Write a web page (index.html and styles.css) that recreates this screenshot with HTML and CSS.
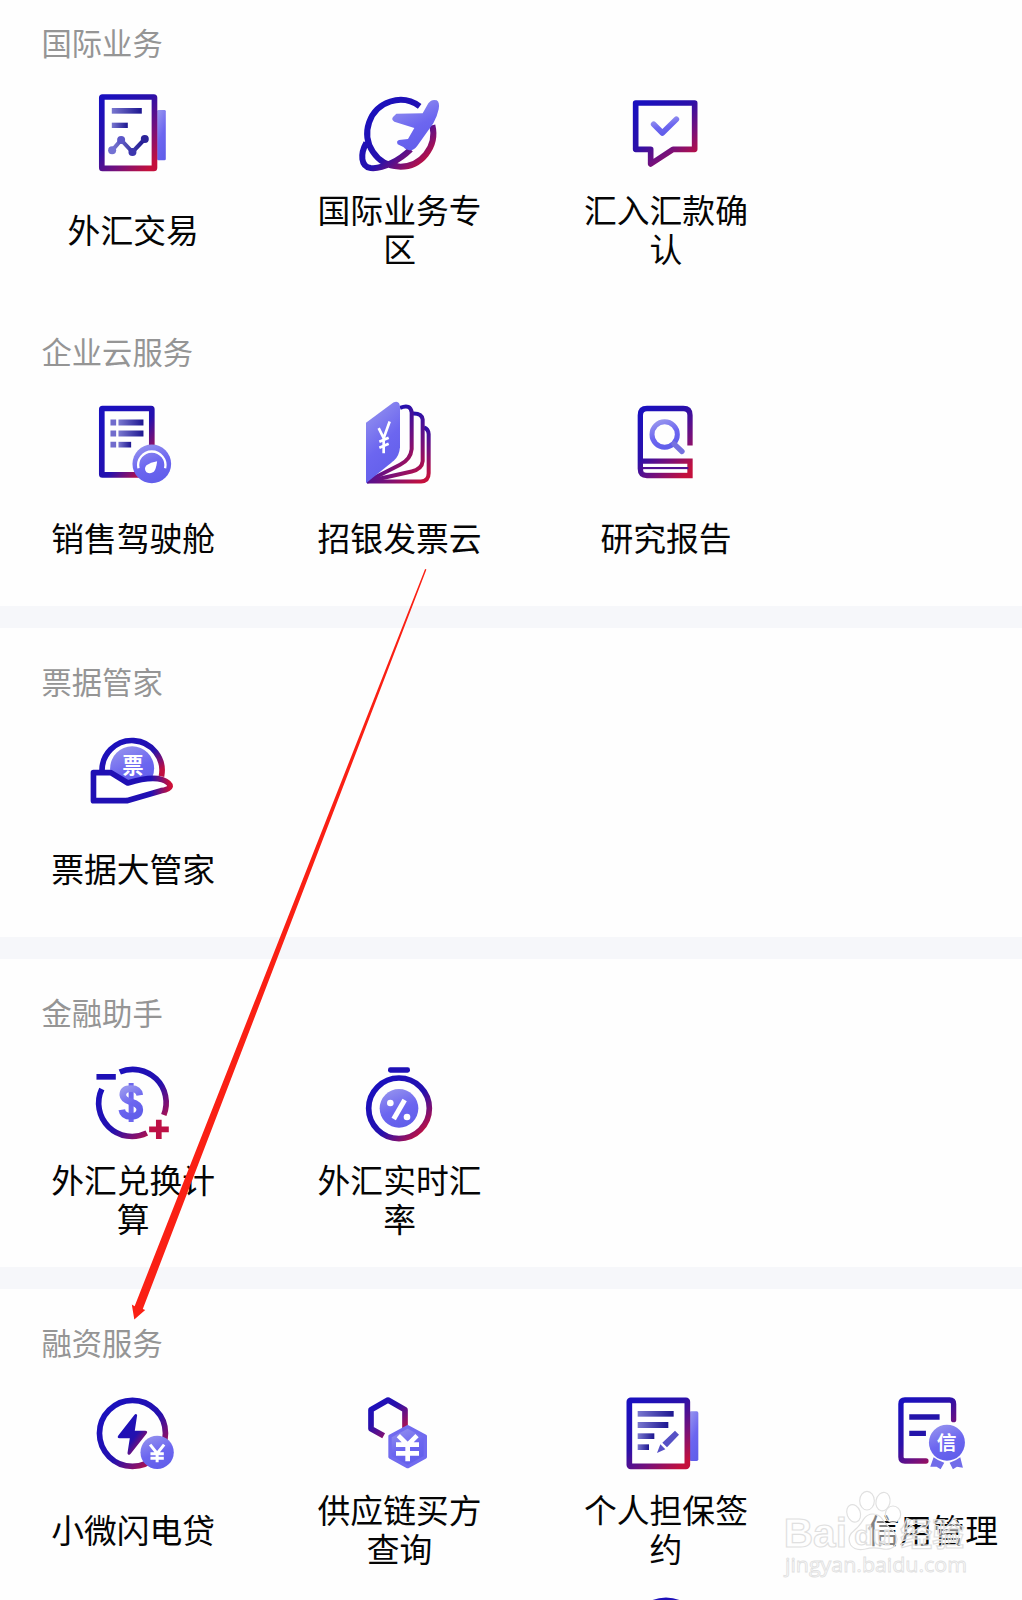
FILE: index.html
```html
<!DOCTYPE html>
<html lang="zh-CN">
<head>
  <meta charset="UTF-8">
  <title>全部服务</title>
  <meta name="viewport" content="width=device-width, initial-scale=1.0">
  <link rel="stylesheet" href="styles.css">
</head>
<body>

  <!-- Shared gradients for all icons -->
  <svg class="defs" width="0" height="0">
    <defs>
      <linearGradient id="line" x1="0.1" y1="0" x2="0.9" y2="1">
        <stop offset="0" stop-color="#1a10be"/>
        <stop offset="0.4" stop-color="#2a10aa"/>
        <stop offset="0.72" stop-color="#7a1078"/>
        <stop offset="1" stop-color="#c4103c"/>
      </linearGradient>
      <linearGradient id="ring" x1="0.1" y1="0.1" x2="0.9" y2="0.9">
        <stop offset="0" stop-color="#1a10be"/>
        <stop offset="0.58" stop-color="#2410ae"/>
        <stop offset="0.85" stop-color="#86106c"/>
        <stop offset="1" stop-color="#c01040"/>
      </linearGradient>
      <linearGradient id="soft" x1="0.2" y1="0" x2="0.6" y2="1">
        <stop offset="0" stop-color="#9593ee"/>
        <stop offset="0.55" stop-color="#6c66f0"/>
        <stop offset="1" stop-color="#615eea"/>
      </linearGradient>
      <linearGradient id="bar" x1="0" y1="0" x2="1" y2="0">
        <stop offset="0" stop-color="#7a78d0"/>
        <stop offset="1" stop-color="#1c1590"/>
      </linearGradient>
    </defs>
  </svg>

  <main class="page">

    <section class="section section-first">
      <h2 class="title">国际业务</h2>
      <div class="row">
        <div class="item">
          <svg class="icon" viewBox="195.6 225 288 288">
            <rect x="412" y="300" width="26" height="151" rx="4" fill="url(#soft)"/>
            <rect x="246" y="261" width="158" height="214" rx="2" fill="#fff" stroke="url(#line)" stroke-width="17"/>
            <rect x="276" y="294" width="90" height="17" fill="url(#bar)"/>
            <rect x="276" y="338" width="48" height="16" fill="url(#bar)"/>
            <path d="M277 421L304 390L338 426L375 387" fill="none" stroke="url(#bar)" stroke-width="12"/>
            <circle cx="277" cy="421" r="12" fill="#7371d3"/>
            <circle cx="304" cy="390" r="12" fill="#5c57c8"/>
            <circle cx="338" cy="426" r="12" fill="#3c36ae"/>
            <circle cx="375" cy="387" r="12" fill="#2c2499"/>
          </svg>
          <p class="label">外汇交易</p>
        </div>
        <div class="item">
          <svg class="icon" viewBox="996 225 288 288">
            <path d="M1199 289A99 100 0 1 0 1237 346M1039 398C1020 432 1022 470 1052 474C1090 478 1140 449 1172 418" fill="none" stroke="url(#ring)" stroke-width="18"/>
            <path d="M1208 310L1225 280Q1235 266 1250 271Q1260 277 1256 298Q1252 318 1240 340L1192 407Q1182 421 1168 421Q1156 420 1150 411L1133 403Q1128 393 1137 390L1164 387L1183 354L1123 335Q1113 329 1119 321L1129 311Z" fill="url(#soft)"/>
          </svg>
          <p class="label">国际业务专区</p>
        </div>
        <div class="item">
          <svg class="icon" viewBox="355 15 288 288">
            <path d="M408 69H585V208H520L453 252V208H408Z" fill="none" stroke="url(#line)" stroke-width="17" stroke-linejoin="round"/>
            <path d="M462 133L488 159L530 118" fill="none" stroke="url(#soft)" stroke-width="17" stroke-linecap="round" stroke-linejoin="round"/>
          </svg>
          <p class="label">汇入汇款确认</p>
        </div>
      </div>
    </section>

    <section class="section">
      <h2 class="title">企业云服务</h2>
      <div class="row">
        <div class="item">
          <svg class="icon" viewBox="195.6 220.5 288 288">
            <rect x="246" y="264" width="150" height="199" rx="2" fill="none" stroke="url(#ring)" stroke-width="17"/>
            <g fill="url(#bar)">
              <rect x="296" y="297" width="75" height="18"/>
              <rect x="296" y="330" width="75" height="18"/>
              <rect x="296" y="364" width="38" height="17"/>
            </g>
            <path d="M272 297h17v18h-17zM272 330h17v18h-17zM272 364h17v17h-17z" fill="#716ccc"/>
            <circle cx="396" cy="430" r="58" fill="url(#soft)"/>
            <path d="M356 443A41 41 0 1 1 436 443" fill="none" stroke="#fff" stroke-width="7"/>
            <path d="M412 422Q392 425 380 434Q371 444 380 455Q391 462 402 454Q409 446 412 422Z" fill="#fff"/>
          </svg>
          <p class="label">销售驾驶舱</p>
        </div>
        <div class="item">
          <svg class="icon" viewBox="996 220.5 288 288">
            <g fill="none" stroke="url(#line)" stroke-width="12">
              <path d="M1041 483H1203Q1226 481 1226 458V341Q1225 325 1212 321"/>
              <path d="M1041 483L1175 453Q1206 446 1208 422V297Q1206 278 1178 279"/>
              <path d="M1041 483L1140 433Q1172 417 1175 386V276Q1172 249 1140 262"/>
            </g>
            <path d="M1038 307L1120 246Q1140 238 1140 262V380Q1138 405 1122 420Q1110 430 1038 488Z" fill="url(#soft)"/>
            <path d="M1076 323L1091 353L1109 303M1091 353V398M1078 364L1106 352M1078 382L1106 370" fill="none" stroke="#fff" stroke-width="8"/>
          </svg>
          <p class="label">招银发票云</p>
        </div>
        <div class="item">
          <svg class="icon" viewBox="115 40.5 288 288">
            <path d="M331 195V104Q331 84 311 84H202Q182 84 182 104V265Q182 285 202 285H331V242H188" fill="none" stroke="url(#line)" stroke-width="16"/>
            <path d="M188 263H326" stroke="#501090" stroke-width="7"/>
            <path d="M192 255H322M192 271H322" stroke="#fff" stroke-width="8"/>
            <circle cx="255" cy="162" r="38" fill="none" stroke="url(#soft)" stroke-width="15"/>
            <path d="M283 190L307 213" fill="none" stroke="#7672df" stroke-width="16" stroke-linecap="round"/>
          </svg>
          <p class="label">研究报告</p>
        </div>
      </div>
    </section>

    <div class="divider"></div>

    <section class="section">
      <h2 class="title">票据管家</h2>
      <div class="row">
        <div class="item">
          <svg class="icon" viewBox="195.6 224 288 288">
            <path d="M247 371A90 90 0 1 1 425 381" fill="none" stroke="url(#ring)" stroke-width="17"/>
            <circle cx="337" cy="357" r="66" fill="url(#soft)"/>
            <text class="glyph" x="339" y="371" font-size="64">票</text>
            <path d="M221 370H273L324 401Q393 380 427 391Q451 400 451 411Q449 420 424 424L321 454H221Z" fill="#fff" stroke="url(#hand)" stroke-width="17" stroke-linejoin="round"/>
            <linearGradient id="hand">
              <stop offset="0.75" stop-color="#2010b4"/>
              <stop offset="1" stop-color="#cc1038"/>
            </linearGradient>
          </svg>
          <p class="label">票据大管家</p>
        </div>
      </div>
    </section>

    <div class="divider"></div>

    <section class="section">
      <h2 class="title">金融助手</h2>
      <div class="row">
        <div class="item">
          <svg class="icon" viewBox="195.6 224 288 288">
            <path d="M300 275A100 100 0 0 1 432 404M381 458A100 100 0 0 1 246 326" fill="none" stroke="url(#ring)" stroke-width="17"/>
            <rect x="230" y="281" width="58" height="17" fill="#1e10b6"/>
            <path d="M388 447H447M417 418V476" stroke="#bd1045" stroke-width="17"/>
            <path d="M334 308V425" stroke="#6d67ee" stroke-width="15"/>
            <path d="M360 345Q357 325 334 325Q309 325 309 344Q310 358 334 365Q360 372 360 388Q359 408 334 408Q309 408 306 388" fill="none" stroke="url(#soft)" stroke-width="20"/>
          </svg>
          <p class="label">外汇兑换计算</p>
        </div>
        <div class="item">
          <svg class="icon" viewBox="996 224 288 288">
            <circle cx="1137" cy="384" r="91" fill="none" stroke="url(#ring)" stroke-width="17"/>
            <rect x="1104" y="261" width="66" height="16" rx="7" fill="#1e10b6"/>
            <circle cx="1137" cy="384" r="58" fill="url(#soft)"/>
            <circle cx="1111" cy="368" r="10" fill="#fff"/>
            <circle cx="1161" cy="410" r="10" fill="#fff"/>
            <path d="M1154 359L1121 416" stroke="#fff" stroke-width="15"/>
          </svg>
          <p class="label">外汇实时汇率</p>
        </div>
      </div>
    </section>

    <div class="divider"></div>

    <section class="section">
      <h2 class="title">融资服务</h2>
      <div class="row">
        <div class="item">
          <svg class="icon" viewBox="195.6 45 288 288">
            <circle cx="338" cy="190" r="99" fill="none" stroke="url(#ring)" stroke-width="17"/>
            <path d="M343 136Q349 128 352 136L345 182H376Q386 183 380 191L332 252Q325 258 323 250L330 205H299Q290 204 296 196Z" fill="url(#ring)"/>
            <circle cx="412" cy="247" r="50" fill="url(#soft)"/>
            <path d="M391 224L412 250L433 224M412 250V277M392 251H432M392 265H432" fill="none" stroke="#fff" stroke-width="9"/>
          </svg>
          <p class="label">小微闪电贷</p>
        </div>
        <div class="item">
          <svg class="icon" viewBox="996 45 288 288">
            <path d="M1091 197L1053 176V119L1104 90L1155 119V176" fill="none" stroke="url(#line)" stroke-width="17" stroke-linejoin="round"/>
            <path d="M1163 170L1216 199V261L1163 290L1110 261V199Z" fill="url(#soft)" stroke="#716bef" stroke-width="10" stroke-linejoin="round"/>
            <path d="M1135 197L1163 225L1191 197M1163 223V274M1128 224H1197M1128 250H1197" fill="none" stroke="#fff" stroke-width="14"/>
          </svg>
          <p class="label">供应链买方查询</p>
        </div>
        <div class="item">
          <svg class="icon" viewBox="174 45 288 288">
            <rect x="388" y="124" width="27" height="149" rx="5" fill="url(#soft)"/>
            <rect x="208" y="91" width="174" height="198" rx="4" fill="#fff" stroke="url(#line)" stroke-width="17"/>
            <g fill="url(#bar)">
              <rect x="233" y="123" width="108" height="17"/>
              <rect x="233" y="156" width="92" height="18"/>
              <rect x="233" y="190" width="50" height="17"/>
              <rect x="233" y="223" width="34" height="17"/>
            </g>
            <path d="M345 182L357 194L321 232L307 218ZM301 223L316 238L291 249Z" fill="#5751c6"/>
          </svg>
          <p class="label">个人担保签约</p>
        </div>
        <div class="item">
          <svg class="icon" viewBox="973.2 45 288 288">
            <path d="M1182 149V102Q1182 90 1170 90H1036Q1024 90 1024 102V261Q1024 273 1036 273H1099" fill="none" stroke="url(#line)" stroke-width="16" stroke-linecap="round"/>
            <path d="M1049 141H1140M1049 190H1099" stroke="#2414aa" stroke-width="16"/>
            <path d="M1122 262Q1136 273 1154 278L1143 298L1131 290L1112 290ZM1202 262Q1188 273 1170 278L1180 298L1192 290L1210 293Z" fill="#716ce9"/>
            <circle cx="1162" cy="218" r="54" fill="url(#soft)"/>
            <text class="glyph" x="1161" y="239" font-size="59">信</text>
          </svg>
          <p class="label">信用管理</p>
        </div>
      </div>
      <div class="row">
        <div class="item"></div>
        <div class="item"></div>
        <div class="item">
          <svg class="icon" viewBox="0 0 288 288">
            <circle cx="144" cy="142" r="99" fill="none" stroke="url(#ring)" stroke-width="17"/>
          </svg>
        </div>
      </div>
    </section>

    <!-- Red pointer over the list -->
    <svg class="arrow" viewBox="0 0 1022 1600">
      <path d="M425.1 569L426.4 569.4L142.8 1309L145.2 1310L134.3 1319.5L131.8 1304.5L134.6 1306.2Z" fill="#fa2014"/>
    </svg>

    <svg class="watermark" viewBox="665 350 570 280">
      <g class="mark">
        <ellipse cx="920" cy="391" rx="22" ry="28"/>
        <ellipse cx="968" cy="394" rx="21" ry="28" transform="rotate(12 968 394)"/>
        <ellipse cx="880" cy="429" rx="20" ry="27" transform="rotate(-20 880 429)"/>
        <ellipse cx="998" cy="432" rx="23" ry="25"/>
        <path d="M938 431Q957 431 968 449Q981 468 1000 483Q1019 506 1002 528Q988 541 963 535Q938 530 915 536Q885 543 871 524Q858 500 880 482Q898 467 909 448Q920 431 938 431Z"/>
        <text x="670" y="531" font-size="124" textLength="190" lengthAdjust="spacingAndGlyphs">Bai</text>
        <text x="882" y="524" font-size="84" textLength="110" lengthAdjust="spacingAndGlyphs">du</text>
        <text class="cjk" x="1020" y="527" font-size="96">经验</text>
        <text class="url" x="674" y="605" font-size="62" textLength="546" lengthAdjust="spacingAndGlyphs">jingyan.baidu.com</text>
      </g>
    </svg>

  </main>

</body>
</html>
```
FILE: styles.css
```css
body {
  margin: 0;
  background: #fefefe;
  color: #050505;
  font-family: "Noto Sans CJK SC", sans-serif;
  overflow: hidden;
}

.defs {
  position: absolute;
}

.page {
  position: relative;
  width: 100%;
  height: 1600px;
  overflow: hidden;
}

/* Sections */
.section {
  padding: 33px 0 28.5px;
}

.section-first {
  padding-top: 22px;
}

.title {
  margin: 0 0 5px;
  padding-left: 41.5px;
  font-size: 30.3px;
  font-weight: 400;
  line-height: 41px;
  color: #959595;
}

.divider {
  height: 22px;
  background: #f6f7fa;
}

/* Icon grid, the fourth column runs past the right edge */
.row {
  display: grid;
  grid-template-columns: repeat(4, 266.4px);
}

.item {
  display: flex;
  flex-direction: column;
  align-items: center;
  gap: 8px;
  height: 184px;
  padding-top: 17px;
}

.icon {
  width: 96px;
  height: 96px;
  flex: none;
}

.label {
  display: flex;
  align-items: center;
  justify-content: center;
  width: 168px;
  height: 78px;
  margin: 0;
  text-align: center;
  font-size: 32.8px;
  line-height: 39px;
}

.glyph {
  fill: #fff;
  font-weight: 700;
  text-anchor: middle;
}

/* Overlays */
.arrow {
  position: absolute;
  top: 0;
  left: 0;
  width: 1022px;
  height: 1600px;
}

.watermark {
  position: absolute;
  left: 781.7px;
  top: 1486.7px;
  width: 190px;
  height: 93.3px;
}

.mark {
  fill: rgba(255, 255, 255, 0.5);
  stroke: #e0e0e0;
  stroke-width: 3.5;
  font-family: "Liberation Sans", sans-serif;
  font-weight: 700;
}

.mark .cjk {
  font-family: "Noto Sans CJK SC", sans-serif;
}

.mark .url {
  font-family: "Open Sans", sans-serif;
  font-weight: 400;
  stroke-width: 2.5;
}
```
